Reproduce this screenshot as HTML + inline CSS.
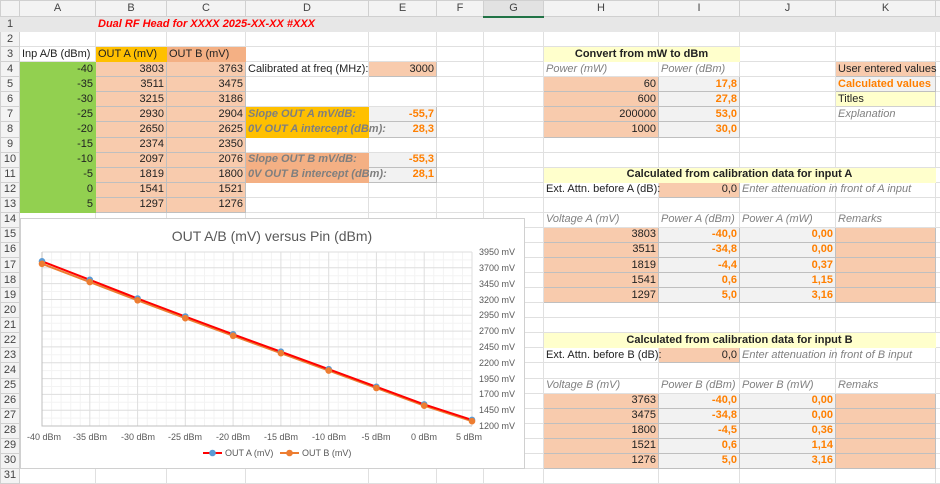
<!DOCTYPE html>
<html><head><meta charset="utf-8">
<style>
*{margin:0;padding:0;box-sizing:border-box}
body{width:940px;height:472px;overflow:hidden;background:#fff;font-family:"Liberation Sans",sans-serif;font-size:11px;color:#222;position:relative}
table{border-collapse:collapse;table-layout:fixed;position:absolute;left:0;top:0;width:940px}
td{height:15.07px;border:1px solid #E0E0E0;white-space:nowrap;overflow:visible;padding:0 2px;line-height:13px;vertical-align:middle}
tr.h td{height:16px;background:#F3F3F3;color:#444;text-align:center;border-color:#D0D0D0}
td.rh{background:#F3F3F3;color:#444;text-align:center;padding:0;border-color:#D0D0D0}
.g{background:#92D050;border-color:#92D050;text-align:right}
.in{background:#F8CBAD;border-color:#BFBFBF;text-align:right}
.c{background:#F2F2F2;border-color:#BFBFBF;color:#FF7F00;font-weight:bold;text-align:right}
.t{background:#FFFFCC;border-color:#FFFFCC;font-weight:bold;text-align:center}
.ex{font-style:italic;color:#808080}
.oa{background:#FFC000;border-color:#FFC000}
.ob{background:#F4B084;border-color:#F4B084}
.sl{font-style:italic;font-weight:bold;color:#7F7F7F}
.r1 td{background:#E7E7E7;border-color:#E7E7E7}
</style></head><body>
<table>
<colgroup><col style="width:19px"><col style="width:76px"><col style="width:71px"><col style="width:79px"><col style="width:123px"><col style="width:68px"><col style="width:47px"><col style="width:60px"><col style="width:115px"><col style="width:81px"><col style="width:96px"><col style="width:100px"><col style="width:5px"></colgroup>
<tr class="h"><td></td><td>A</td><td>B</td><td>C</td><td>D</td><td>E</td><td>F</td><td style="background:#E2E2E2;border-bottom:2px solid #217346">G</td><td>H</td><td>I</td><td>J</td><td>K</td><td></td></tr>
<tr class="r1"><td class="rh">1</td><td></td><td colspan="4" style="color:#FF0000;font-weight:bold;font-style:italic;text-align:left">Dual RF Head for XXXX 2025-XX-XX #XXX</td><td></td><td></td><td></td><td></td><td></td><td></td><td></td></tr>
<tr><td class="rh">2</td><td></td><td></td><td></td><td></td><td></td><td></td><td></td><td></td><td></td><td></td><td></td><td></td></tr>
<tr><td class="rh">3</td><td>Inp A/B (dBm)</td><td class="oa">OUT A (mV)</td><td class="ob">OUT B (mV)</td><td></td><td></td><td></td><td></td><td colspan="2" class="t">Convert from mW to dBm</td><td></td><td></td><td></td></tr>
<tr><td class="rh">4</td><td class="g">-40</td><td class="in">3803</td><td class="in">3763</td><td>Calibrated at freq (MHz):</td><td class="in">3000</td><td></td><td></td><td class="ex">Power (mW)</td><td class="ex">Power (dBm)</td><td></td><td class="in" style="text-align:left">User entered values</td><td></td></tr>
<tr><td class="rh">5</td><td class="g">-35</td><td class="in">3511</td><td class="in">3475</td><td></td><td></td><td></td><td></td><td class="in">60</td><td class="c">17,8</td><td></td><td class="c" style="text-align:left">Calculated values</td><td></td></tr>
<tr><td class="rh">6</td><td class="g">-30</td><td class="in">3215</td><td class="in">3186</td><td></td><td></td><td></td><td></td><td class="in">600</td><td class="c">27,8</td><td></td><td style="background:#FFFFCC;border-color:#D0D0D0">Titles</td><td></td></tr>
<tr><td class="rh">7</td><td class="g">-25</td><td class="in">2930</td><td class="in">2904</td><td class="oa sl">Slope OUT A mV/dB:</td><td class="c">-55,7</td><td></td><td></td><td class="in">200000</td><td class="c">53,0</td><td></td><td class="ex">Explanation</td><td></td></tr>
<tr><td class="rh">8</td><td class="g">-20</td><td class="in">2650</td><td class="in">2625</td><td class="oa sl">0V OUT A intercept (dBm):</td><td class="c">28,3</td><td></td><td></td><td class="in">1000</td><td class="c">30,0</td><td></td><td></td><td></td></tr>
<tr><td class="rh">9</td><td class="g">-15</td><td class="in">2374</td><td class="in">2350</td><td></td><td></td><td></td><td></td><td></td><td></td><td></td><td></td><td></td></tr>
<tr><td class="rh">10</td><td class="g">-10</td><td class="in">2097</td><td class="in">2076</td><td class="ob sl">Slope OUT B mV/dB:</td><td class="c">-55,3</td><td></td><td></td><td></td><td></td><td></td><td></td><td></td></tr>
<tr><td class="rh">11</td><td class="g">-5</td><td class="in">1819</td><td class="in">1800</td><td class="ob sl">0V OUT B intercept (dBm):</td><td class="c">28,1</td><td></td><td></td><td colspan="4" class="t">Calculated from calibration data for input A</td><td></td></tr>
<tr><td class="rh">12</td><td class="g">0</td><td class="in">1541</td><td class="in">1521</td><td></td><td></td><td></td><td></td><td>Ext. Attn. before A (dB):</td><td class="in">0,0</td><td class="ex">Enter attenuation in front of A input</td><td></td><td></td></tr>
<tr><td class="rh">13</td><td class="g">5</td><td class="in">1297</td><td class="in">1276</td><td></td><td></td><td></td><td></td><td></td><td></td><td></td><td></td><td></td></tr>
<tr><td class="rh">14</td><td></td><td></td><td></td><td></td><td></td><td></td><td></td><td class="ex">Voltage A (mV)</td><td class="ex">Power A (dBm)</td><td class="ex">Power A (mW)</td><td class="ex">Remarks</td><td></td></tr>
<tr><td class="rh">15</td><td></td><td></td><td></td><td></td><td></td><td></td><td></td><td class="in">3803</td><td class="c">-40,0</td><td class="c">0,00</td><td class="in"></td><td></td></tr>
<tr><td class="rh">16</td><td></td><td></td><td></td><td></td><td></td><td></td><td></td><td class="in">3511</td><td class="c">-34,8</td><td class="c">0,00</td><td class="in"></td><td></td></tr>
<tr><td class="rh">17</td><td></td><td></td><td></td><td></td><td></td><td></td><td></td><td class="in">1819</td><td class="c">-4,4</td><td class="c">0,37</td><td class="in"></td><td></td></tr>
<tr><td class="rh">18</td><td></td><td></td><td></td><td></td><td></td><td></td><td></td><td class="in">1541</td><td class="c">0,6</td><td class="c">1,15</td><td class="in"></td><td></td></tr>
<tr><td class="rh">19</td><td></td><td></td><td></td><td></td><td></td><td></td><td></td><td class="in">1297</td><td class="c">5,0</td><td class="c">3,16</td><td class="in"></td><td></td></tr>
<tr><td class="rh">20</td><td></td><td></td><td></td><td></td><td></td><td></td><td></td><td></td><td></td><td></td><td></td><td></td></tr>
<tr><td class="rh">21</td><td></td><td></td><td></td><td></td><td></td><td></td><td></td><td></td><td></td><td></td><td></td><td></td></tr>
<tr><td class="rh">22</td><td></td><td></td><td></td><td></td><td></td><td></td><td></td><td colspan="4" class="t">Calculated from calibration data for input B</td><td></td></tr>
<tr><td class="rh">23</td><td></td><td></td><td></td><td></td><td></td><td></td><td></td><td>Ext. Attn. before B (dB):</td><td class="in">0,0</td><td class="ex">Enter attenuation in front of B input</td><td></td><td></td></tr>
<tr><td class="rh">24</td><td></td><td></td><td></td><td></td><td></td><td></td><td></td><td></td><td></td><td></td><td></td><td></td></tr>
<tr><td class="rh">25</td><td></td><td></td><td></td><td></td><td></td><td></td><td></td><td class="ex">Voltage B (mV)</td><td class="ex">Power B (dBm)</td><td class="ex">Power B (mW)</td><td class="ex">Remaks</td><td></td></tr>
<tr><td class="rh">26</td><td></td><td></td><td></td><td></td><td></td><td></td><td></td><td class="in">3763</td><td class="c">-40,0</td><td class="c">0,00</td><td class="in"></td><td></td></tr>
<tr><td class="rh">27</td><td></td><td></td><td></td><td></td><td></td><td></td><td></td><td class="in">3475</td><td class="c">-34,8</td><td class="c">0,00</td><td class="in"></td><td></td></tr>
<tr><td class="rh">28</td><td></td><td></td><td></td><td></td><td></td><td></td><td></td><td class="in">1800</td><td class="c">-4,5</td><td class="c">0,36</td><td class="in"></td><td></td></tr>
<tr><td class="rh">29</td><td></td><td></td><td></td><td></td><td></td><td></td><td></td><td class="in">1521</td><td class="c">0,6</td><td class="c">1,14</td><td class="in"></td><td></td></tr>
<tr><td class="rh">30</td><td></td><td></td><td></td><td></td><td></td><td></td><td></td><td class="in">1276</td><td class="c">5,0</td><td class="c">3,16</td><td class="in"></td><td></td></tr>
<tr><td class="rh">31</td><td></td><td></td><td></td><td></td><td></td><td></td><td></td><td></td><td></td><td></td><td></td><td></td></tr>
</table>

<svg style="position:absolute;left:0;top:0" width="940" height="472" viewBox="0 0 940 472" font-family="Liberation Sans, sans-serif">
<rect x="20.5" y="218.5" width="504" height="250" fill="#fff" stroke="#D0D0D0"/>
<g stroke="#F3F3F3" stroke-width="1">
<path d="M51.6 252V426M61.1 252V426M70.7 252V426M80.2 252V426M99.4 252V426M108.9 252V426M118.5 252V426M128 252V426M147.2 252V426M156.7 252V426M166.3 252V426M175.8 252V426M194.9 252V426M204.5 252V426M214 252V426M223.6 252V426M242.7 252V426M252.3 252V426M261.8 252V426M271.4 252V426M290.5 252V426M300 252V426M309.6 252V426M319.1 252V426M338.3 252V426M347.8 252V426M357.4 252V426M366.9 252V426M386 252V426M395.6 252V426M405.1 252V426M414.7 252V426M433.8 252V426M443.4 252V426M452.9 252V426M462.5 252V426"/>
<path d="M42 259.9H472M42 275.7H472M42 291.5H472M42 307.3H472M42 323.2H472M42 339H472M42 354.8H472M42 370.6H472M42 386.5H472M42 402.3H472M42 418.1H472"/>
</g>
<g stroke="#DEDEDE" stroke-width="1">
<path d="M89.8 252V426M137.6 252V426M185.3 252V426M233.1 252V426M280.9 252V426M328.7 252V426M376.4 252V426M424.2 252V426M472 252V426"/>
<path d="M42 252H472M42 267.8H472M42 283.6H472M42 299.5H472M42 315.3H472M42 331.1H472M42 346.9H472M42 362.7H472M42 378.6H472M42 394.4H472M42 410.2H472"/>
</g>
<path d="M42 252V426H472" stroke="#BFBFBF" fill="none"/>
<text x="272" y="241" text-anchor="middle" font-size="14" fill="#595959">OUT A/B (mV) versus Pin (dBm)</text>
<g font-size="9" fill="#595959" text-anchor="end">
<text x="515" y="255">3950  mV</text><text x="515" y="271">3700  mV</text><text x="515" y="287">3450  mV</text><text x="515" y="303">3200  mV</text><text x="515" y="318">2950  mV</text><text x="515" y="334">2700  mV</text><text x="515" y="350">2450  mV</text><text x="515" y="366">2200  mV</text><text x="515" y="382">1950  mV</text><text x="515" y="397">1700  mV</text><text x="515" y="413">1450  mV</text><text x="515" y="429">1200  mV</text>
</g>
<g font-size="9" fill="#595959" text-anchor="middle">
<text x="44" y="440">-40  dBm</text><text x="90" y="440">-35  dBm</text><text x="138" y="440">-30  dBm</text><text x="185" y="440">-25  dBm</text><text x="233" y="440">-20  dBm</text><text x="281" y="440">-15  dBm</text><text x="329" y="440">-10  dBm</text><text x="376" y="440">-5  dBm</text><text x="424" y="440">0  dBm</text><text x="469" y="440">5  dBm</text>
</g>
<polyline fill="none" stroke="#ED7D31" stroke-width="2" points="42,263.8 89.8,282.1 137.6,300.3 185.3,318.2 233.1,335.8 280.9,353.2 328.7,370.6 376.4,388 424.2,405.7 472,421.2"/>
<polyline fill="none" stroke="#FF0000" stroke-width="2" points="42,261.3 89.8,279.8 137.6,298.5 185.3,316.5 233.1,334.3 280.9,351.7 328.7,369.2 376.4,386.8 424.2,404.4 472,419.9"/>
<g fill="#5B9BD5"><circle cx="42" cy="261.3" r="3.3"/><circle cx="89.8" cy="279.8" r="3.3"/><circle cx="137.6" cy="298.5" r="3.3"/><circle cx="185.3" cy="316.5" r="3.3"/><circle cx="233.1" cy="334.3" r="3.3"/><circle cx="280.9" cy="351.7" r="3.3"/><circle cx="328.7" cy="369.2" r="3.3"/><circle cx="376.4" cy="386.8" r="3.3"/><circle cx="424.2" cy="404.4" r="3.3"/><circle cx="472" cy="419.9" r="3.3"/></g>
<g fill="#ED7D31"><circle cx="42" cy="263.8" r="3.3"/><circle cx="89.8" cy="282.1" r="3.3"/><circle cx="137.6" cy="300.3" r="3.3"/><circle cx="185.3" cy="318.2" r="3.3"/><circle cx="233.1" cy="335.8" r="3.3"/><circle cx="280.9" cy="353.2" r="3.3"/><circle cx="328.7" cy="370.6" r="3.3"/><circle cx="376.4" cy="388" r="3.3"/><circle cx="424.2" cy="405.7" r="3.3"/><circle cx="472" cy="421.2" r="3.3"/></g>
<path d="M203 453H222" stroke="#FF0000" stroke-width="2"/><circle cx="212.5" cy="453" r="3.3" fill="#5B9BD5"/>
<text x="225" y="456" font-size="9" fill="#595959">OUT A (mV)</text>
<path d="M280 453H299" stroke="#ED7D31" stroke-width="2"/><circle cx="289.5" cy="453" r="3.3" fill="#ED7D31"/>
<text x="302" y="456" font-size="9" fill="#595959">OUT B (mV)</text>
</svg>
</body></html>
